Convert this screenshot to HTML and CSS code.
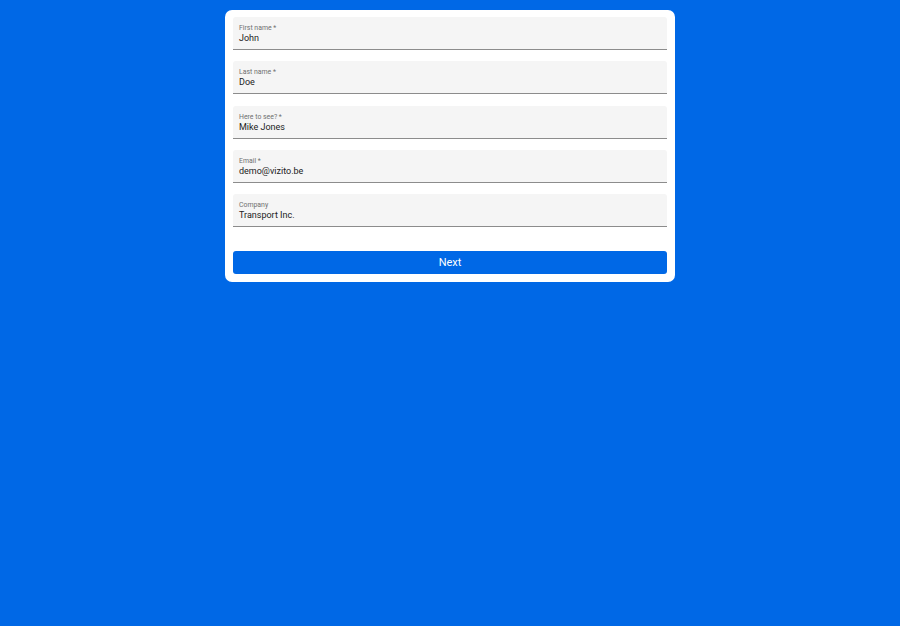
FILE: index.html
```html
<!DOCTYPE html>
<html>
<head>
<meta charset="utf-8">
<link rel="stylesheet" href="styles.css">
</head>
<body>
<div class="card">
  <div class="field"><span class="label">First name *</span><span class="value">John</span></div>
  <div class="field"><span class="label">Last name *</span><span class="value">Doe</span></div>
  <div class="field"><span class="label">Here to see? *</span><span class="value">Mike Jones</span></div>
  <div class="field"><span class="label">Email *</span><span class="value">demo@vizito.be</span></div>
  <div class="field"><span class="label">Company</span><span class="value">Transport Inc.</span></div>
  <button class="next">Next</button>
</div>
</body>
</html>
```
FILE: styles.css
```css
html, body {
  margin: 0;
  padding: 0;
  background: #0068e6;
  height: 100%;
}
body {
  font-family: Roboto, "Liberation Sans", sans-serif;
  padding-top: 10px;
  box-sizing: border-box;
}
.card {
  width: 450px;
  margin: 0 auto;
  background: #ffffff;
  border-radius: 7px;
  padding: 7px 8px 8px;
  box-sizing: border-box;
  display: flex;
  flex-direction: column;
  gap: 11.3px;
}
.field {
  height: 33px;
  box-sizing: border-box;
  background: #f5f5f5;
  border-bottom: 1px solid #8c8c8c;
  border-radius: 3px 3px 0 0;
  padding: 7px 6px 0;
  display: flex;
  flex-direction: column;
}
.label {
  font-size: 6.9px;
  line-height: 8px;
  color: #707070;
}
.value {
  font-size: 9px;
  line-height: 12px;
  color: #222222;
}
.next {
  margin-top: 13px;
  height: 23px;
  border: none;
  border-radius: 3px;
  background: #0068e6;
  color: #ffffff;
  font-family: Roboto, "Liberation Sans", sans-serif;
  font-size: 11px;
  font-weight: 400;
  padding: 0;
}
```
